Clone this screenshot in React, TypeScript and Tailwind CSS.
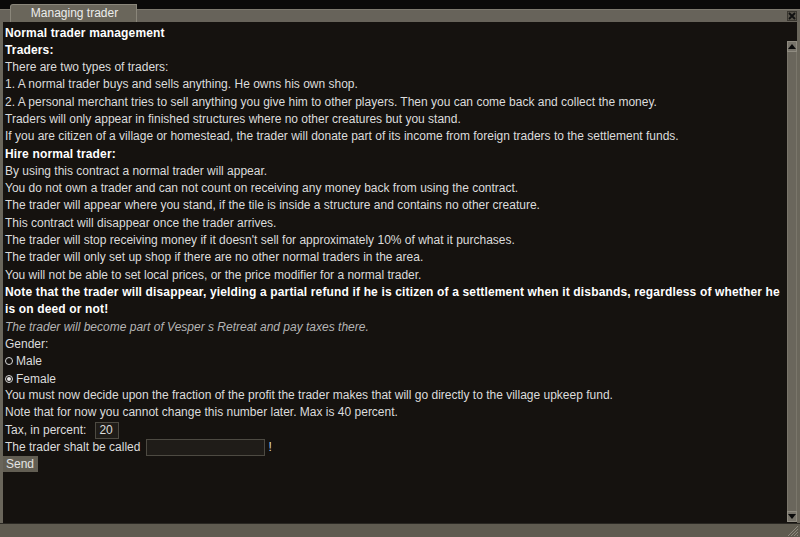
import React from "react";

const lines: { t: string; k?: "b" | "i" }[] = [
  { t: "Normal trader management", k: "b" },
  { t: "Traders:", k: "b" },
  { t: "There are two types of traders:" },
  { t: "1. A normal trader buys and sells anything. He owns his own shop." },
  { t: "2. A personal merchant tries to sell anything you give him to other players. Then you can come back and collect the money." },
  { t: "Traders will only appear in finished structures where no other creatures but you stand." },
  { t: "If you are citizen of a village or homestead, the trader will donate part of its income from foreign traders to the settlement funds." },
  { t: "Hire normal trader:", k: "b" },
  { t: "By using this contract a normal trader will appear." },
  { t: "You do not own a trader and can not count on receiving any money back from using the contract." },
  { t: "The trader will appear where you stand, if the tile is inside a structure and contains no other creature." },
  { t: "This contract will disappear once the trader arrives." },
  { t: "The trader will stop receiving money if it doesn't sell for approximately 10% of what it purchases." },
  { t: "The trader will only set up shop if there are no other normal traders in the area." },
  { t: "You will not be able to set local prices, or the price modifier for a normal trader." },
  { t: "Note that the trader will disappear, yielding a partial refund if he is citizen of a settlement when it disbands, regardless of whether he is on deed or not!", k: "b" },
  { t: "The trader will become part of Vesper s Retreat and pay taxes there.", k: "i" },
];

function Radio({ on }: { on?: boolean }) {
  return (
    <span className="inline-flex w-[8px] h-[8px] rounded-full border border-[#d8d8d8] items-center justify-center mr-[3px] bg-[#15120f]">
      {on && <span className="w-[4px] h-[4px] rounded-full bg-[#e8e8e8]" />}
    </span>
  );
}

export default function App() {
  return (
    <div
      className="w-[800px] h-[537px] bg-[#0b0a09] flex flex-col text-[12px] overflow-hidden"
      style={{ fontFamily: '"Liberation Sans", Arial, sans-serif' }}
    >
      {/* header */}
      <div className="h-[22px] flex items-end shrink-0">
        <div className="w-[10px] h-[13px] bg-[#67635a] border-t border-[#7d796e]" />
        <div className="w-[127px] h-[18px] bg-[#6a665b] border-t border-l border-r border-[#8a867a] rounded-tl-[3px] flex items-center justify-center text-[#ececec] leading-none pb-[1px] pl-[2px]">
          Managing trader
        </div>
        <div className="flex-1 h-[13px] bg-[#67635a] border-t border-[#7d796e] flex items-center justify-end pr-[3px]">
          <div className="w-[10px] h-[10px] bg-[#58544b] border border-[#3a3730] flex items-center justify-center">
            <svg width="8" height="8" viewBox="0 0 8 8">
              <path d="M1 1 L7 7 M7 1 L1 7" stroke="#111" strokeWidth="1.8" />
            </svg>
          </div>
        </div>
      </div>

      {/* body */}
      <div className="flex-1 flex min-h-0">
        <div className="w-[3px] bg-[#6a665b]" />
        <div className="flex-1 bg-[#15120f] pl-[2px] pt-[2.5px] leading-[17.3px] text-[#dcdcdc]">
          {lines.map((l, i) => (
            <div
              key={i}
              className={
                l.k === "b"
                  ? "font-bold text-white tracking-[0.15px]"
                  : l.k === "i"
                  ? "italic text-[#b4b4b4]"
                  : ""
              }
            >
              {l.t}
            </div>
          ))}
          <div>Gender:</div>
          <div className="flex items-center h-[16px]">
            <Radio />
            Male
          </div>
          <div className="flex items-center h-[18px] pt-[2px]">
            <Radio on />
            Female
          </div>
          <div>You must now decide upon the fraction of the profit the trader makes that will go directly to the village upkeep fund.</div>
          <div>Note that for now you cannot change this number later. Max is 40 percent.</div>
          <div className="flex items-center h-[17.3px]">
            Tax, in percent:
            <span className="ml-[9px] w-[24px] h-[17px] bg-[#1f1c18] border border-[#4d4a42] pl-[3px] leading-[15px]">20</span>
          </div>
          <div className="flex items-center h-[17.3px]">
            The trader shalt be called
            <span className="ml-[6px] w-[119px] h-[17px] bg-[#1f1c18] border border-[#4d4a42]" />
            <span className="ml-[3px]">!</span>
          </div>
          <div className="flex">
            <div className="-ml-[2px] w-[35px] h-[16px] bg-[#625e53] text-[#e4e4e4] leading-[16px] pl-[3px]">Send</div>
          </div>
        </div>
        <div className="w-[10px] bg-[#15120f] flex flex-col pt-[19px] pb-[1px]">
          <div className="h-[11px] bg-[#77736a] border border-[#8f8b80] flex items-center justify-center">
            <svg width="8" height="5" viewBox="0 0 8 5">
              <path d="M0 5 L4 0 L8 5 Z" fill="#0a0a0a" />
            </svg>
          </div>
          <div className="flex-1 bg-[#6a665c] border-x border-[#7a766b]" />
          <div className="h-[11px] bg-[#77736a] border border-[#8f8b80] flex items-center justify-center">
            <svg width="8" height="5" viewBox="0 0 8 5">
              <path d="M0 0 L8 0 L4 5 Z" fill="#0a0a0a" />
            </svg>
          </div>
        </div>
        <div className="w-[3px] bg-[#6a665b]" />
      </div>

      {/* bottom bar */}
      <div className="h-[14px] shrink-0 bg-[#5f5b50] border-t border-[#2a2823] flex justify-end items-end">
        <svg width="12" height="12" viewBox="0 0 12 12" className="mr-[1px]">
          <path d="M11 1 L1 11 M11 4 L4 11 M11 7 L7 11 M11 10 L10 11" stroke="#8d897e" strokeWidth="1" />
        </svg>
      </div>
    </div>
  );
}
